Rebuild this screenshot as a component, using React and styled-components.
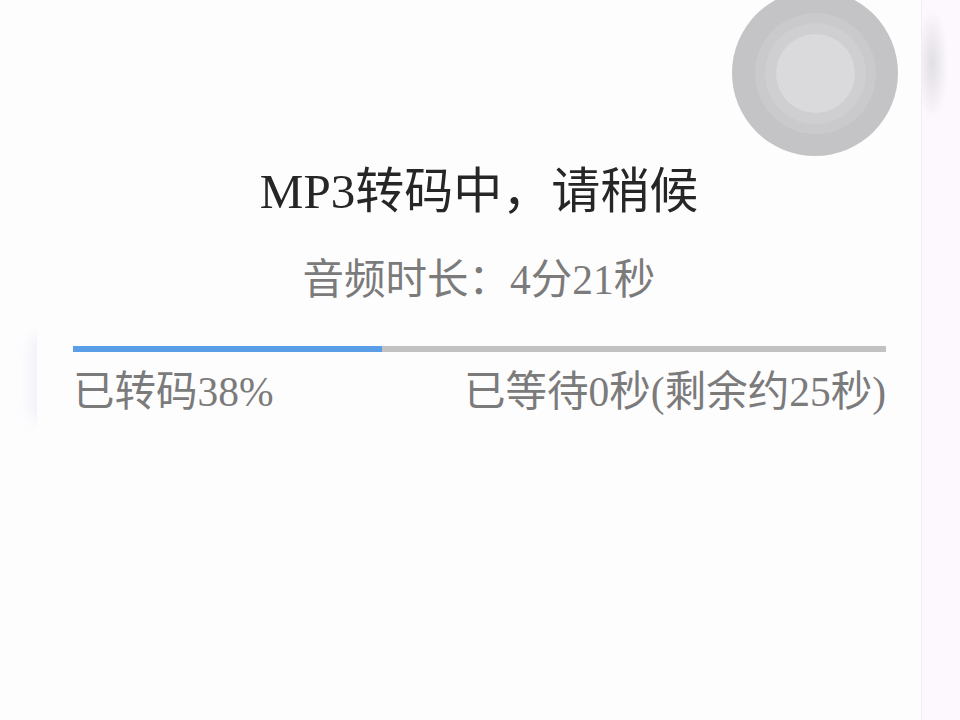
import React from 'react';
import styled, { createGlobalStyle } from 'styled-components';

const GlobalStyle = createGlobalStyle`
  html, body {
    margin: 0;
    padding: 0;
    background: #fefdfe;
  }
  body {
    font-family: "Liberation Serif", "Noto Sans CJK SC", serif;
  }
`;

const StyledPage = styled.div`
  display: flex;
  width: 960px;
  height: 720px;
  overflow: hidden;
`;

const StyledMain = styled.div`
  position: relative;
  width: 921px;
  height: 100%;
  padding-left: 37px;
  box-sizing: border-box;
  display: flex;
  flex-direction: column;
  align-items: center;
`;

const StyledSide = styled.div`
  flex: 1;
  border-left: 1px solid #f5ebf7;
  background:
    radial-gradient(ellipse 16px 56px at 10px 64px, rgba(200, 198, 204, 0.5), rgba(200, 198, 204, 0) 100%),
    #fcf8fd;
`;

const StyledRing = styled.div`
  width: ${(p) => p.size}px;
  height: ${(p) => p.size}px;
  border-radius: 50%;
  background: ${(p) => p.color};
  display: flex;
  align-items: center;
  justify-content: center;
`;

const StyledBall = styled.div`
  position: absolute;
  left: 732px;
  top: -10px;
`;

const StyledTitle = styled.h1`
  margin: 163px 0 0 0;
  font-size: 49px;
  line-height: 58px;
  font-weight: normal;
  color: #262626;
`;

const StyledDuration = styled.div`
  margin-top: 34px;
  font-size: 41.5px;
  line-height: 50px;
  color: #7b7b7b;
`;

const StyledPanel = styled.div`
  align-self: stretch;
  margin-top: 20px;
  padding: 21px 35px 14px 36px;
  box-shadow: -14px 0 18px -12px rgba(215, 225, 240, 0.6);
`;

const StyledTrack = styled.div`
  height: 6px;
  background: #c2c2c2;
`;

const StyledFill = styled.div`
  height: 100%;
  background: #5b9ee8;
`;

const StyledStatus = styled.div`
  display: flex;
  justify-content: space-between;
  margin-top: 15px;
  font-size: 41.5px;
  line-height: 50px;
  color: #7b7b7b;
`;

const App = () => {
  const percent = 38;
  return (
    <>
      <GlobalStyle />
      <StyledPage>
        <StyledMain>
          <StyledBall>
            <StyledRing size={166} color="#c4c3c5">
              <StyledRing size={121} color="#cac9cb">
                <StyledRing size={101} color="#cfced0">
                  <StyledRing size={79} color="#dad9db" />
                </StyledRing>
              </StyledRing>
            </StyledRing>
          </StyledBall>
          <StyledTitle>MP3转码中，请稍候</StyledTitle>
          <StyledDuration>音频时长：4分21秒</StyledDuration>
          <StyledPanel>
            <StyledTrack>
              <StyledFill style={{ width: `${percent}%` }} />
            </StyledTrack>
            <StyledStatus>
              <span>已转码{percent}%</span>
              <span>已等待0秒(剩余约25秒)</span>
            </StyledStatus>
          </StyledPanel>
        </StyledMain>
        <StyledSide />
      </StyledPage>
    </>
  );
};

export default App;
